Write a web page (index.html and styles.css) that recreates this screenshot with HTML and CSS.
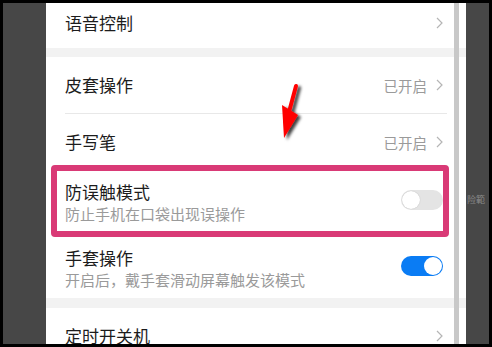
FILE: index.html
```html
<!DOCTYPE html>
<html lang="zh">
<head>
<meta charset="utf-8">
<link rel="stylesheet" href="styles.css">
</head>
<body>
<div class="frame">
  <div class="side-left"></div>
  <div class="panel">
    <div class="row first">
      <span class="title">语音控制</span>
      <span class="right"><svg class="chev" viewBox="0 0 7 12"><polyline points="1,1 6,6 1,11"/></svg></span>
    </div>
    <div class="band"></div>
    <div class="row">
      <span class="title">皮套操作</span>
      <span class="right"><span class="status">已开启</span><svg class="chev" viewBox="0 0 7 12"><polyline points="1,1 6,6 1,11"/></svg></span>
    </div>
    <div class="divider"></div>
    <div class="row">
      <span class="title">手写笔</span>
      <span class="right"><span class="status">已开启</span><svg class="chev" viewBox="0 0 7 12"><polyline points="1,1 6,6 1,11"/></svg></span>
    </div>
    <div class="row two">
      <div class="texts">
        <div class="title">防误触模式</div>
        <div class="sub">防止手机在口袋出现误操作</div>
      </div>
      <span class="toggle"><span class="knob"></span></span>
    </div>
    <div class="row two tight">
      <div class="texts">
        <div class="title">手套操作</div>
        <div class="sub">开启后，戴手套滑动屏幕触发该模式</div>
      </div>
      <span class="toggle on"><span class="knob"></span></span>
    </div>
    <div class="band wide"></div>
    <div class="row">
      <span class="title">定时开关机</span>
      <span class="right"><svg class="chev" viewBox="0 0 7 12"><polyline points="1,1 6,6 1,11"/></svg></span>
    </div>
    <div class="scrollbar"></div>
    <div class="highlight"></div>
  </div>
  <div class="side-right"><span class="tiny">险範</span></div>
  <svg class="arrow" viewBox="0 0 492 347" width="492" height="347">
    <defs>
      <filter id="sh" x="-50%" y="-50%" width="200%" height="200%">
        <feDropShadow dx="3" dy="2" stdDeviation="1.6" flood-color="#000" flood-opacity="0.75"/>
      </filter>
    </defs>
    <g filter="url(#sh)">
      <line x1="296" y1="86" x2="289" y2="112" stroke="#ff0000" stroke-width="4" stroke-linecap="round"/>
      <polygon points="282,105 298,115 284,138" fill="#ff0000"/>
    </g>
  </svg>
</div>
</body>
</html>
```

FILE: styles.css
```css
html, body {
  margin: 0;
  padding: 0;
  background: #000;
}
body {
  width: 492px;
  height: 347px;
  overflow: hidden;
  font-family: "Noto Sans CJK SC", "Noto Sans", sans-serif;
}
.frame {
  position: relative;
  display: flex;
  width: 486px;
  height: 341px;
  padding: 3px 3px 3px 3px;
}
.side-left {
  width: 43px;
  background: #474747;
}
.side-right {
  width: 23px;
  background: #474747;
  padding-top: 191px;
  box-sizing: border-box;
  display: flex;
  justify-content: flex-start;
}
.tiny {
  font-size: 9px;
  line-height: 12px;
  color: #8a8a8a;
  margin-left: 1px;
  white-space: nowrap;
}
.panel {
  position: relative;
  width: 420px;
  background: #fff;
  overflow: hidden;
}
.row {
  display: flex;
  align-items: center;
  justify-content: space-between;
  height: 56px;
  padding: 0 23px 0 19px;
  box-sizing: border-box;
}
.row.first {
  height: 45px;
  padding-bottom: 6px;
}
.row.two {
  height: 66px;
  align-items: flex-start;
  padding-top: 11px;
}
.row.tight {
  height: 62px;
}
.title {
  font-size: 17px;
  line-height: 22px;
  color: #1c1c1c;
}
.sub {
  font-size: 15px;
  line-height: 22px;
  color: #9a9a9a;
}
.right {
  display: flex;
  align-items: center;
}
.status {
  font-size: 14.5px;
  color: #9a9a9a;
  margin-right: 9px;
}
.chev {
  width: 7px;
  height: 12px;
  fill: none;
  stroke: #b5b5b5;
  stroke-width: 1.2;
}
.band {
  height: 9px;
  background: #f2f2f2;
}
.band.wide {
  height: 10px;
}
.divider {
  height: 1px;
  background: #e8e8e8;
  margin: 0 19px 0 19px;
}
.toggle {
  position: relative;
  margin-top: 9px;
  width: 42px;
  height: 20px;
  border-radius: 10px;
  background: #e4e4e4;
  flex-shrink: 0;
}
.toggle .knob {
  position: absolute;
  top: 1px;
  left: 1px;
  width: 18px;
  height: 18px;
  border-radius: 50%;
  background: #fff;
  box-shadow: 0 0 1px rgba(0,0,0,0.25);
}
.toggle.on {
  background: #0a7cf4;
}
.toggle.on .knob {
  left: 23px;
  box-shadow: none;
}
.scrollbar {
  position: absolute;
  top: 0;
  left: 408px;
  width: 5px;
  height: 100%;
  background: #c8c8c8;
}
.highlight {
  position: absolute;
  left: 5px;
  top: 162px;
  width: 398px;
  height: 72px;
  box-sizing: border-box;
  border: 6px solid #d93a76;
  border-radius: 4px;
}
.arrow {
  position: absolute;
  left: 0;
  top: 0;
  pointer-events: none;
}
```
